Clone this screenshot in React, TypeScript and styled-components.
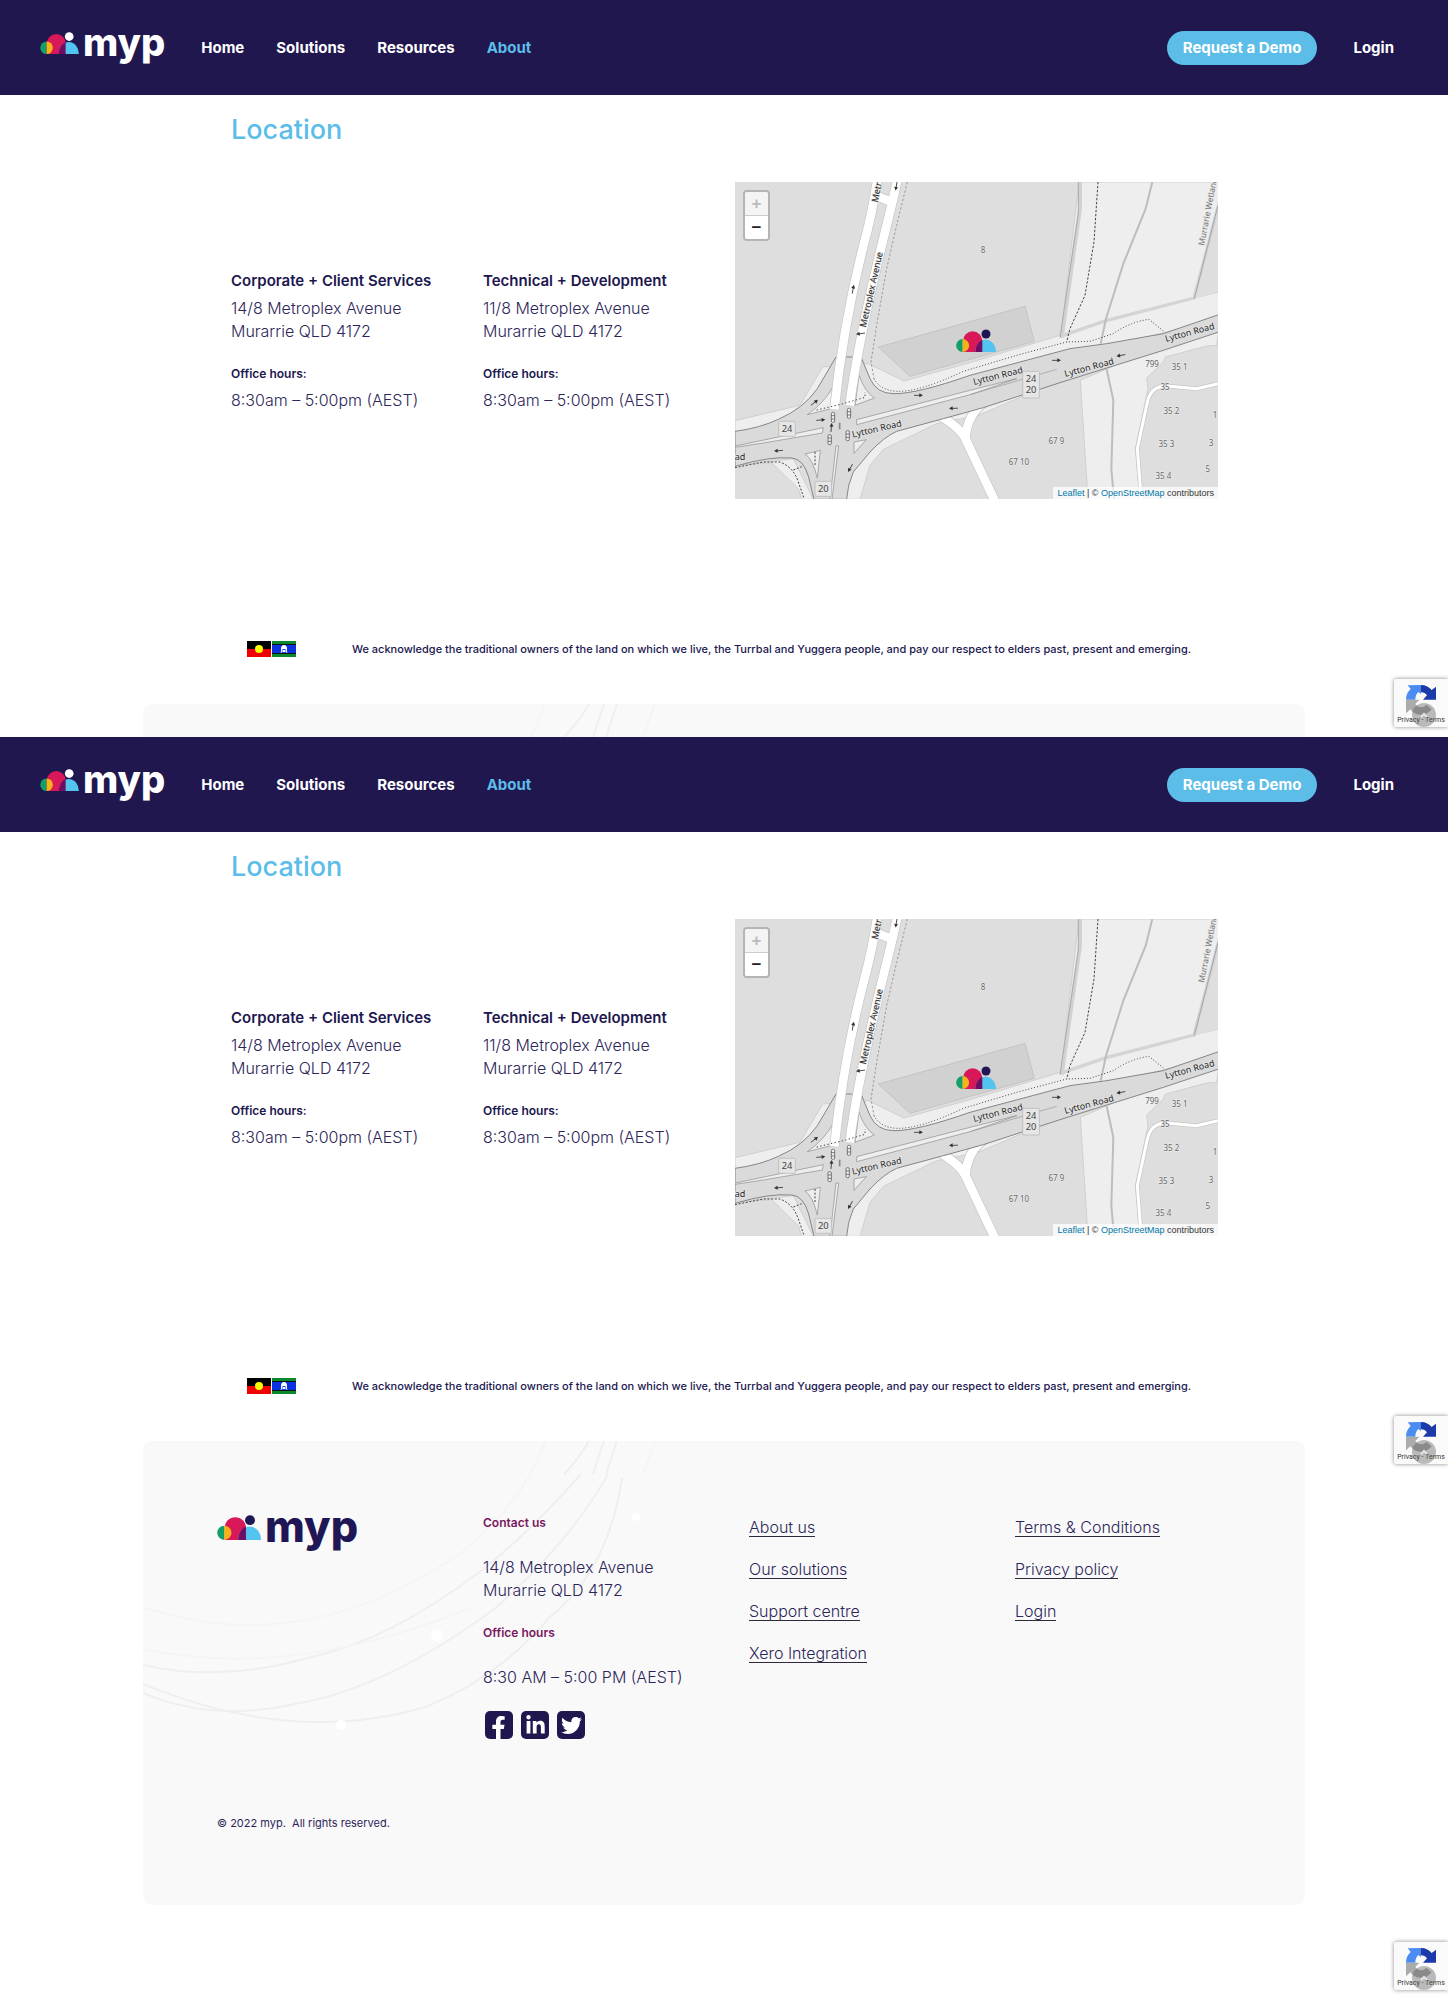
import React from "react";
import styled, { createGlobalStyle } from "styled-components";
import { FaFacebookF, FaLinkedinIn, FaTwitter } from "react-icons/fa";

const navy = "#20174f";
const ink = "#2c2559";
const sky = "#5bbde8";
const plum = "#79185f";

const GlobalStyle = createGlobalStyle`
  *, *::before, *::after { box-sizing: border-box; }
  body {
    margin: 0;
    background: #fff;
    color: ${ink};
    font-family: Inter, "Liberation Sans", sans-serif;
    font-size: 16px;
    line-height: 23px;
    font-weight: 300;
  }
  h2, h3, h4, p, ul, address { margin: 0; padding: 0; font-style: normal; }
  ul { list-style: none; }
  a { color: inherit; text-decoration: none; }
`;

/* ---------- Logo ---------- */

const LogoLink = styled.a<{ $large?: boolean }>`
  display: flex;
  align-items: flex-start;
  gap: 4px;
  color: ${(p) => (p.$large ? "#1f1656" : "#fff")};
  svg {
    width: ${(p) => (p.$large ? 44 : 39)}px;
    height: ${(p) => (p.$large ? 25 : 22)}px;
  }
`;

const Wordmark = styled.span<{ $large?: boolean }>`
  font-size: ${(p) => (p.$large ? 43 : 38)}px;
  line-height: ${(p) => (p.$large ? 22 : 20)}px;
  font-weight: 800;
`;

const Mark = ({ head }: { head: string }) => (
  <svg viewBox="0 0 120 68" aria-hidden="true">
    <path d="M21 68V35a29 29 0 0 1 58 0V68Z" fill="#d9185a" />
    <path d="M20 29a19.500 19.500 0 0 0 0 39Z" fill="#12a068" />
    <path d="M20 29a19.500 19.500 0 0 1 0 39Z" fill="#f7b218" />
    <path d="M58 68a31 37 0 0 1 62 0Z" fill="#53c3ef" />
    <path d="M58 68c0-17 9-32 21-36v36Z" fill="#6d0d64" />
    <circle cx="90" cy="14" r="13.500" fill={head} />
  </svg>
);

const Logo = ({ large }: { large?: boolean }) => (
  <LogoLink href="#" aria-label="myp home" $large={large}>
    <Mark head={large ? "#1f1656" : "#fff"} />
    <Wordmark $large={large}>myp</Wordmark>
  </LogoLink>
);

/* ---------- Header ---------- */

const Header = styled.header`
  display: flex;
  align-items: center;
  height: 95px;
  padding: 0 54px 0 40px;
  background: ${navy};
  color: #fff;
  font-size: 15px;
  font-weight: 700;
`;

const LogoSlot = styled.div`
  align-self: flex-start;
  padding-top: 32px;
`;

const NavList = styled.ul`
  display: flex;
  gap: 32px;
  margin-left: 36px;
`;

const NavLink = styled.a<{ $current?: boolean }>`
  color: ${(p) => (p.$current ? sky : "#fff")};
`;

const Actions = styled.div`
  display: flex;
  align-items: center;
  gap: 36px;
  margin-left: auto;
`;

const DemoButton = styled.button`
  height: 34px;
  padding: 0 16px;
  border: 0;
  border-radius: 17px;
  background: ${sky};
  color: #fff;
  font: inherit;
`;

const SiteHeader = () => (
  <Header>
    <LogoSlot>
      <Logo />
    </LogoSlot>
    <nav aria-label="Main">
      <NavList>
        {["Home", "Solutions", "Resources", "About"].map((label) => (
          <li key={label}>
            <NavLink href="#" $current={label === "About"}>
              {label}
            </NavLink>
          </li>
        ))}
      </NavList>
    </nav>
    <Actions>
      <DemoButton type="button">Request a Demo</DemoButton>
      <NavLink href="#">Login</NavLink>
    </Actions>
  </Header>
);

/* ---------- Map ---------- */

const MapFrame = styled.div`
  position: relative;
  background: #dedede;
  > svg {
    display: block;
    width: 100%;
    height: auto;
  }
`;

const ZoomBox = styled.div`
  position: absolute;
  top: 8px;
  left: 8px;
  display: flex;
  flex-direction: column;
  border: 2px solid #b4b4b4;
  border-radius: 4px;
  overflow: hidden;
`;

const ZoomButton = styled.button`
  width: 23px;
  height: 23px;
  padding: 0;
  border: 0;
  background: #fff;
  color: #222;
  font: bold 17px/23px "Liberation Sans", sans-serif;
  & + & {
    border-top: 1px solid #ccc;
    height: 24px;
  }
  &:disabled {
    background: #f4f4f4;
    color: #bbb;
  }
`;

const Attribution = styled.div`
  position: absolute;
  right: 0;
  bottom: 0;
  padding: 0 4px;
  background: rgba(255, 255, 255, 0.75);
  color: #333;
  font: 9px/12px "Liberation Sans", Arial, sans-serif;
  a { color: #0078a8; }
`;

const Arrow = ({ x, y, a }: { x: number; y: number; a: number }) => (
  <g transform={`translate(${x} ${y}) rotate(${a})`}>
    <path d="M-13 0H8" stroke="#333" strokeWidth="2.500" />
    <path d="M14 0L3-6V6Z" fill="#333" />
  </g>
);

const Signal = ({ x, y }: { x: number; y: number }) => (
  <g transform={`translate(${x} ${y})`} fill="#eee" stroke="#444" strokeWidth="2">
    <rect x="-5" y="-15" width="10" height="30" rx="4" />
    <path d="M-5-5H5M-5 5H5" />
  </g>
);

const Shield = ({ x, y, lines }: { x: number; y: number; lines: string[] }) => (
  <g>
    <rect x={x - 25} y={y - 22} width="50" height={10 + lines.length * 35} rx="3" fill="#e6e6e6" stroke="#b0b0b0" strokeWidth="2" />
    {lines.map((t, i) => (
      <text key={t} x={x} y={y + 10 + i * 34} fontSize="28" fill="#444" textAnchor="middle">
        {t}
      </text>
    ))}
  </g>
);

const houseNumbers: [number, number, string][] = [
  [759, 232, "8"],
  [1266, 575, "799"],
  [1349, 584, "35 1"],
  [1305, 643, "35"],
  [1324, 717, "35 2"],
  [1309, 814, "35 3"],
  [1300, 912, "35 4"],
  [979, 807, "67 9"],
  [867, 868, "67 10"],
  [1455, 727, "1"],
  [1443, 811, "3"],
  [1433, 890, "5"],
];

const StreetMap = () => (
  <svg
    viewBox="15 20 1449 951"
    fontFamily="'Noto Sans', sans-serif"
    fontWeight="400"
    role="img"
    aria-label="Map of Lytton Road and Metroplex Avenue"
  >
    <rect x="15" y="20" width="1449" height="951" fill="#dedede" />
    {/* parks and verges */}
    <g fill="#eee" stroke="#c4c4c4" strokeWidth="2">
      <path d="M1047 20H1466V75L1394 372L1128 434L992 487Z" />
      <path d="M15 736L210 690L278 575L355 570L415 565L522 617L720 562L1000 477L1128 434L1466 350V430L720 620L300 740L15 800Z" />
      <path d="M1051 615L1270 520L1466 465L1460 510L1430 512L1306 545L1300 560L1250 608L1254 640L1216 820L1230 972H1074Z" />
      <path d="M340 972L362 880L480 770L1000 610L745 720L620 745L460 822L420 870L390 972Z" />
      <path d="M15 870L190 850L250 972H215L205 940L125 862Z" />
    </g>
    <path d="M1464 75V350L1394 370Z" fill="#dedede" />
    <path d="M1050 20V100L995 487" fill="none" stroke="#d2d2d2" strokeWidth="12" />
    <path d="M1045 20V115L990 487" fill="none" stroke="#aaa" strokeWidth="3" />
    <path d="M1000 480L1128 436L1392 368L1464 95" fill="none" stroke="#d4d4d4" strokeWidth="10" />
    <path d="M1393 370L1464 90" fill="none" stroke="#a5a5a5" strokeWidth="3" />
    <path d="M1267 20L1247 100L1180 265L1128 430L1112 505M1130 582L1150 675L1144 880L1152 972" fill="none" stroke="#bdbdbd" strokeWidth="6" />
    {/* building footprint */}
    <path d="M445 515L885 393L913 498L540 603Z" fill="#d1d1d1" stroke="#b9b9b9" strokeWidth="2" />
    {/* service roads */}
    <g fill="none">
      <path d="M620 715Q690 755 706 790L795 978M765 680Q712 715 706 790" stroke="#c6c6c6" strokeWidth="30" />
      <path d="M620 715Q690 755 706 790L795 978M765 680Q712 715 706 790" stroke="#fff" strokeWidth="26" />
      <path d="M1464 625L1400 640L1310 632Q1260 630 1250 690L1222 820L1234 975" stroke="#c6c6c6" strokeWidth="13" />
      <path d="M1464 625L1400 640L1310 632Q1260 630 1250 690L1222 820L1234 975" stroke="#fff" strokeWidth="9" />
    </g>
    {/* main road surface */}
    <path
      d="M15 768Q90 758 145 732Q220 700 262 640L318 545H393L420 610Q440 655 492 655Q560 656 720 600L1020 520L1130 505L1300 475L1466 418V470L1300 525L990 622L760 697L640 730L500 768Q462 785 420 830L370 890Q352 930 350 972H252L236 905Q220 850 185 848Q120 842 15 873Z"
      fill="#dadada"
      stroke="#858585"
      strokeWidth="3"
    />
    {/* medians and islands */}
    <g fill="#eee" stroke="#8a8a8a" strokeWidth="2">
      <path d="M380 733L720 645L860 610L720 658L380 748Z" />
      <path d="M15 812L280 757L277 773L100 803L15 816Z" />
      <path d="M232 718Q285 680 308 635L303 700Z" />
      <path d="M387 600Q405 650 433 668L375 690Z" />
      <path d="M225 836L271 825L262 908Q248 850 225 836Z" />
      <path d="M372 800L409 793L372 834Z" />
      <path d="M318 812H326L306 972H300Z" />
    </g>
    <path d="M720 658L980 582" stroke="#999" strokeWidth="2" />
    <path d="M329 742V762" stroke="#888" strokeWidth="5" />
    {/* Metroplex Avenue */}
    <g fill="none">
      <path d="M441 20Q428 110 398 220Q340 450 313 702M501 20Q490 70 470 150Q385 490 359 690M440 62L485 80" stroke="#c6c6c6" strokeWidth="30" />
      <path d="M441 18Q428 110 398 220Q340 450 313 702M501 18Q490 70 470 150Q385 490 359 690M440 62L485 80" stroke="#fff" strokeWidth="26" />
    </g>
    {/* footpaths */}
    <g fill="none" stroke="#444" strokeWidth="3">
      <path d="M532 20L500 150L470 280L440 450L423 560L432 610" stroke="#999" strokeDasharray="7 6" />
      <path d="M432 610Q450 645 500 648Q570 650 700 588L860 540L1010 500L1080 498L1150 475Q1200 440 1257 432L1300 467" strokeDasharray="3 6" />
      <path d="M1104 20L1092 200L1065 360L1020 460L1010 500" strokeDasharray="7 5" />
      <path d="M260 704L340 685L405 666V650" strokeDasharray="4 7" />
      <path d="M15 877L100 860L150 860Q190 875 205 920L223 972M190 884L215 874M255 830V870" strokeDasharray="6 5" />
    </g>
    <Arrow x={499} y={32} a={100} />
    <Arrow x={369} y={342} a={-80} />
    <Arrow x={392} y={475} a={172} />
    <Arrow x={253} y={682} a={-38} />
    <Arrow x={272} y={734} a={-5} />
    <Arrow x={304} y={757} a={-85} />
    <Arrow x={146} y={826} a={176} />
    <Arrow x={565} y={660} a={0} />
    <Arrow x={671} y={699} a={178} />
    <Arrow x={361} y={878} a={120} />
    <Arrow x={979} y={555} a={0} />
    <Arrow x={1173} y={540} a={170} />
    <Signal x={309} y={726} />
    <Signal x={357} y={714} />
    <Signal x={353} y={781} />
    <Signal x={299} y={793} />
    {/* labels */}
    <g fontSize="27" fill="#222" stroke="#e8e8e8" strokeWidth="4" paintOrder="stroke">
      <text transform="translate(443 82) rotate(-78)">Metroplex</text>
      <text transform="translate(407 457) rotate(-77)">Metroplex Avenue</text>
      <text transform="translate(368 787) rotate(-13)">Lytton Road</text>
      <text transform="translate(732 629) rotate(-14)">Lytton Road</text>
      <text transform="translate(1006 605) rotate(-15)">Lytton Road</text>
      <text transform="translate(1308 500) rotate(-15)">Lytton Road</text>
      <text x="14" y="855">ad</text>
      <text transform="translate(1422 212) rotate(-79)" fontSize="25" fill="#777">
        Murrarie Wetland
      </text>
    </g>
    <g fontSize="24" fill="#666" stroke="#eee" strokeWidth="3" paintOrder="stroke" textAnchor="middle">
      {houseNumbers.map(([x, y, t]) => (
        <text key={t} x={x} y={y}>
          {t}
        </text>
      ))}
    </g>
    <Shield x={171} y={760} lines={["24"]} />
    <Shield x={280} y={940} lines={["20"]} />
    <Shield x={903} y={610} lines={["24", "20"]} />
    <svg x="678" y="462" width="120" height="68">
      <Mark head="#1f1656" />
    </svg>
  </svg>
);

const LocationMap = () => (
  <MapFrame>
    <StreetMap />
    <ZoomBox>
      <ZoomButton type="button" aria-label="Zoom in" disabled>
        +
      </ZoomButton>
      <ZoomButton type="button" aria-label="Zoom out">
        −
      </ZoomButton>
    </ZoomBox>
    <Attribution>
      <a href="#">Leaflet</a> | © <a href="#">OpenStreetMap</a> contributors
    </Attribution>
  </MapFrame>
);

/* ---------- Location section ---------- */

const Location = styled.section`
  max-width: 988px;
  margin: 0 auto;
  padding: 17px 0 0 1px;
`;

const SectionTitle = styled.h2`
  margin-bottom: 34px;
  color: ${sky};
  font-size: 27px;
  line-height: 36px;
  font-weight: 500;
`;

const LocationGrid = styled.div`
  display: grid;
  grid-template-columns: 1fr 1fr 483px;
  align-items: center;
`;

const OfficeName = styled.h3`
  margin-bottom: 5px;
  font-size: 15px;
  line-height: 23px;
  font-weight: 600;
  color: ${navy};
`;

const OfficeLabel = styled.h4`
  margin: 19px 0 4px;
  font-size: 12px;
  line-height: 23px;
  font-weight: 600;
  color: ${navy};
`;

const Office = ({ name, street }: { name: string; street: string }) => (
  <div>
    <OfficeName>{name}</OfficeName>
    <address>
      {street}
      <br />
      Murarrie QLD 4172
    </address>
    <OfficeLabel>Office hours:</OfficeLabel>
    <p>8:30am – 5:00pm (AEST)</p>
  </div>
);

const Acknowledgement = styled.div`
  display: flex;
  align-items: center;
  gap: 56px;
  max-width: 986px;
  min-height: 24px;
  margin: 138px auto 43px;
  padding-left: 16px;
  font-size: 11px;
  font-weight: 500;
  color: ${navy};
`;

const Flags = styled.div`
  display: flex;
  flex-shrink: 0;
  gap: 1px;
  svg {
    width: 24px;
    height: 16px;
  }
`;

const AcknowledgementRow = () => (
  <Acknowledgement>
    <Flags>
      <svg viewBox="0 0 24 16" role="img" aria-label="Aboriginal flag">
        <path d="M0 0H24V8H0Z" fill="#000" />
        <path d="M0 8H24V16H0Z" fill="#f00000" />
        <circle cx="12" cy="8" r="4" fill="#ff0" />
      </svg>
      <svg viewBox="0 0 24 16" role="img" aria-label="Torres Strait Islander flag">
        <path d="M0 0H24V16H0Z" fill="#0a8a2c" />
        <path d="M0 3H24V13H0Z" fill="#111" />
        <path d="M0 4H24V12H0Z" fill="#0a32e0" />
        <path d="M8.500 12Q9.500 10 9 8Q9 4 12 4T15 8Q14.500 10 15.500 12L13.500 11V8H10.500V11Z" fill="#fff" />
        <circle cx="12" cy="10" r="1.200" fill="#fff" />
      </svg>
    </Flags>
    <p>
      We acknowledge the traditional owners of the land on which we live, the Turrbal and Yuggera people, and pay our
      respect to elders past, present and emerging.
    </p>
  </Acknowledgement>
);

/* ---------- Footer ---------- */

const FooterPanel = styled.footer`
  position: relative;
  max-width: 1162px;
  margin: 0 auto;
  padding: 70px 24px 70px 74px;
  border-radius: 9px;
  background: #f9f9f9;
  overflow: hidden;
`;

const FooterArt = styled.svg`
  position: absolute;
  top: 0;
  left: 0;
  width: 560px;
  height: 300px;
`;

const FooterGrid = styled.div`
  position: relative;
  display: grid;
  grid-template-columns: repeat(4, 1fr);
  margin-bottom: 73px;
`;

const FooterLogo = styled.div`
  padding-top: 4px;
`;

const FooterLabel = styled.h4<{ $spaced?: boolean }>`
  margin: ${(p) => (p.$spaced ? 19 : 0)}px 0 22px;
  color: ${plum};
  font-size: 12px;
  line-height: 23px;
  font-weight: 600;
`;

const SocialList = styled.ul`
  display: flex;
  gap: 8px;
  margin: 22px 0 0 2px;
`;

const SocialLink = styled.a<{ $corner?: boolean }>`
  display: flex;
  align-items: ${(p) => (p.$corner ? "flex-end" : "center")};
  justify-content: ${(p) => (p.$corner ? "flex-end" : "center")};
  width: 28px;
  height: 28px;
  padding-right: ${(p) => (p.$corner ? 3 : 0)}px;
  border-radius: 5px;
  background: ${navy};
  color: #fff;
  font-size: ${(p) => (p.$corner ? 23 : 21)}px;
`;

const LinkList = styled.ul`
  display: grid;
  gap: 23px;
  align-content: start;
  padding-top: 7px;
  line-height: 18px;
  li { display: flex; }
`;

const FooterLink = styled.a`
  border-bottom: 1px solid #2e2a3c;
`;

const Copyright = styled.p`
  position: relative;
  font-size: 11px;
  font-weight: 400;
  white-space: pre-wrap;
`;

const SiteFooter = () => (
  <FooterPanel>
    <FooterArt viewBox="0 0 560 300" aria-hidden="true">
      <g fill="none" stroke="#efefef" strokeWidth="2">
        <path d="M446 0Q436 18 421 33M461 0L450 33M474 0L463 33" />
        <path d="M438 33Q385 93 339 129Q246 200 168 216Q80 242 0 224" />
        <path d="M465 33Q430 97 354 166Q246 246 157 262Q70 282 0 252" />
        <path d="M479 37Q465 130 407 176Q354 238 282 266Q150 305 0 243" />
      </g>
      <g fill="none" stroke="#f5f5f5" strokeWidth="2">
        <path d="M402 0Q382 60 318 112Q160 220 0 166M512 0L500 33M0 208Q150 240 330 166" />
      </g>
      <g fill="#fff">
        <circle cx="294" cy="194" r="6" />
        <circle cx="198" cy="284" r="5" />
        <circle cx="493" cy="76" r="4" />
      </g>
    </FooterArt>
    <FooterGrid>
      <FooterLogo>
        <Logo large />
      </FooterLogo>
      <div>
        <FooterLabel>Contact us</FooterLabel>
        <address>
          14/8 Metroplex Avenue
          <br />
          Murarrie QLD 4172
        </address>
        <FooterLabel $spaced>Office hours</FooterLabel>
        <p>8:30 AM – 5:00 PM (AEST)</p>
        <SocialList>
          <li>
            <SocialLink href="#" aria-label="Facebook" $corner>
              <FaFacebookF />
            </SocialLink>
          </li>
          <li>
            <SocialLink href="#" aria-label="LinkedIn">
              <FaLinkedinIn />
            </SocialLink>
          </li>
          <li>
            <SocialLink href="#" aria-label="Twitter">
              <FaTwitter />
            </SocialLink>
          </li>
        </SocialList>
      </div>
      {[
        ["About us", "Our solutions", "Support centre", "Xero Integration"],
        ["Terms & Conditions", "Privacy policy", "Login"],
      ].map((group) => (
        <LinkList key={group[0]}>
          {group.map((label) => (
            <li key={label}>
              <FooterLink href="#">{label}</FooterLink>
            </li>
          ))}
        </LinkList>
      ))}
    </FooterGrid>
    <Copyright>{"© 2022 myp.  All rights reserved."}</Copyright>
  </FooterPanel>
);

/* ---------- reCAPTCHA badge ---------- */

const Badge = styled.aside<{ $atEnd?: boolean }>`
  position: absolute;
  right: 0;
  ${(p) => (p.$atEnd ? "bottom: 9px;" : "top: 679px;")}
  width: 54px;
  height: 48px;
  padding-top: 5px;
  border-radius: 2px 0 0 2px;
  background: #fafafa;
  box-shadow: 0 0 4px #888;
  text-align: center;
  font: 7px/9px Roboto, sans-serif;
  color: #333;
  svg {
    display: block;
    width: 32px;
    height: 32px;
    margin: 0 auto;
  }
`;

const ToTop = styled.button`
  position: absolute;
  left: 18px;
  bottom: 0;
  width: 24px;
  height: 24px;
  padding: 0;
  border: 0;
  border-radius: 12px;
  background: rgba(90, 90, 90, 0.4);
  svg {
    width: 12px;
    height: 12px;
  }
`;

const Recaptcha = ({ atEnd }: { atEnd?: boolean }) => (
  <Badge $atEnd={atEnd} aria-label="reCAPTCHA">
    <svg viewBox="0 0 96 96" aria-hidden="true">
      <path d="M48 3V30L40 24C34 30 31 37 31 47H3C3 33 8 23 17 15L8 4Z" fill="#4a8cf0" />
      <path d="M48 3C62 3 73 9 80 18L93 8V47H54L66 34C62 28 56 25 48 25Z" fill="#1c3aa9" />
      <path d="M3 47H43L31 60C37 70 55 74 64 62L80 76C62 98 32 98 16 76L3 88Z" fill="#ababab" />
    </svg>
    <a href="#">Privacy</a> - <a href="#">Terms</a>
    <ToTop type="button" aria-label="Back to top">
      <svg viewBox="0 0 12 12" aria-hidden="true">
        <path d="M3 8L6 5L9 8" fill="none" stroke="#e4e4e4" strokeWidth="2" />
      </svg>
    </ToTop>
  </Badge>
);

/* ---------- Page ---------- */

const Screen = styled.div<{ $clipped?: boolean }>`
  position: relative;
  ${(p) => (p.$clipped ? "height: 737px; overflow: hidden;" : "padding-bottom: 94px;")}
`;

const LocationScreen = ({ clipped }: { clipped?: boolean }) => (
  <Screen $clipped={clipped}>
    <SiteHeader />
    <main>
      <Location>
        <SectionTitle>Location</SectionTitle>
        <LocationGrid>
          <Office name="Corporate + Client Services" street="14/8 Metroplex Avenue" />
          <Office name="Technical + Development" street="11/8 Metroplex Avenue" />
          <LocationMap />
        </LocationGrid>
      </Location>
      <AcknowledgementRow />
    </main>
    <SiteFooter />
    <Recaptcha />
    {!clipped && <Recaptcha atEnd />}
  </Screen>
);

export default function App() {
  return (
    <>
      <GlobalStyle />
      <LocationScreen clipped />
      <LocationScreen />
    </>
  );
}
